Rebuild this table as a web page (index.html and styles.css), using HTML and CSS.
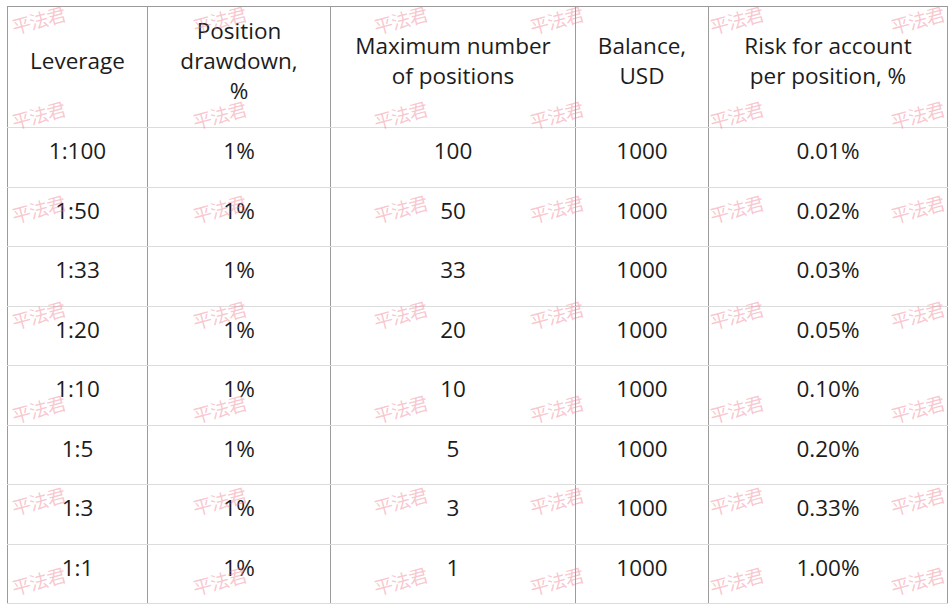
FILE: index.html
```html
<!DOCTYPE html>
<html lang="en">
<head>
<meta charset="utf-8">
<title>Leverage table</title>
<link rel="stylesheet" href="styles.css">
</head>
<body>
<div class="page">
  <table class="risk">
    <colgroup>
      <col class="c1"><col class="c2"><col class="c3"><col class="c4"><col class="c5">
    </colgroup>
    <thead>
      <tr>
        <th>Leverage</th>
        <th class="narrow">Position drawdown, %</th>
        <th>Maximum number of positions</th>
        <th>Balance, USD</th>
        <th>Risk for account per position, %</th>
      </tr>
    </thead>
    <tbody>
      <tr><td>1:100</td><td>1%</td><td>100</td><td>1000</td><td>0.01%</td></tr>
      <tr><td>1:50</td><td>1%</td><td>50</td><td>1000</td><td>0.02%</td></tr>
      <tr><td>1:33</td><td>1%</td><td>33</td><td>1000</td><td>0.03%</td></tr>
      <tr><td>1:20</td><td>1%</td><td>20</td><td>1000</td><td>0.05%</td></tr>
      <tr><td>1:10</td><td>1%</td><td>10</td><td>1000</td><td>0.10%</td></tr>
      <tr><td>1:5</td><td>1%</td><td>5</td><td>1000</td><td>0.20%</td></tr>
      <tr><td>1:3</td><td>1%</td><td>3</td><td>1000</td><td>0.33%</td></tr>
      <tr><td>1:1</td><td>1%</td><td>1</td><td>1000</td><td>1.00%</td></tr>
    </tbody>
  </table>
  <div class="marks" aria-hidden="true">
    <span class="wm x1 y1">平法君</span><span class="wm x2 y1">平法君</span><span class="wm x3 y1">平法君</span><span class="wm x4 y1">平法君</span><span class="wm x5 y1">平法君</span><span class="wm x6 y1">平法君</span>
    <span class="wm x1 y2">平法君</span><span class="wm x2 y2">平法君</span><span class="wm x3 y2">平法君</span><span class="wm x4 y2">平法君</span><span class="wm x5 y2">平法君</span><span class="wm x6 y2">平法君</span>
    <span class="wm x1 y3">平法君</span><span class="wm x2 y3">平法君</span><span class="wm x3 y3">平法君</span><span class="wm x4 y3">平法君</span><span class="wm x5 y3">平法君</span><span class="wm x6 y3">平法君</span>
    <span class="wm x1 y4">平法君</span><span class="wm x2 y4">平法君</span><span class="wm x3 y4">平法君</span><span class="wm x4 y4">平法君</span><span class="wm x5 y4">平法君</span><span class="wm x6 y4">平法君</span>
    <span class="wm x1 y5">平法君</span><span class="wm x2 y5">平法君</span><span class="wm x3 y5">平法君</span><span class="wm x4 y5">平法君</span><span class="wm x5 y5">平法君</span><span class="wm x6 y5">平法君</span>
    <span class="wm x1 y6">平法君</span><span class="wm x2 y6">平法君</span><span class="wm x3 y6">平法君</span><span class="wm x4 y6">平法君</span><span class="wm x5 y6">平法君</span><span class="wm x6 y6">平法君</span>
    <span class="wm x1 y7">平法君</span><span class="wm x2 y7">平法君</span><span class="wm x3 y7">平法君</span><span class="wm x4 y7">平法君</span><span class="wm x5 y7">平法君</span><span class="wm x6 y7">平法君</span>
  </div>
</div>
</body>
</html>
```

FILE: styles.css
```css
html, body {
  margin: 0;
  padding: 0;
  background: #ffffff;
}

.page {
  position: relative;
  width: 951px;
  height: 612px;
  padding: 6px 0 0 7px;
  box-sizing: border-box;
  overflow: hidden;
}

.risk {
  border-collapse: collapse;
  table-layout: fixed;
  width: 940px;
  font-family: "Open Sans", "Liberation Sans", sans-serif;
  font-size: 22.5px;
  line-height: 30px;
  color: #1c1c1c;
}

.c1 { width: 140px; }
.c2 { width: 183px; }
.c3 { width: 245px; }
.c4 { width: 133px; }
.c5 { width: 239px; }

.risk th,
.risk td {
  font-weight: 400;
  text-align: center;
  vertical-align: middle;
  padding: 8px 20px 20.5px;
  border-left: 1px solid #9c9c9c;
  border-right: 1px solid #9c9c9c;
  border-top: 1px solid #dcdcdc;
  border-bottom: 1px solid #dcdcdc;
}

.risk th {
  padding-top: 9px;
  padding-bottom: 21px;
  border-top: 1px solid #9a9a9a;
}

.risk th.narrow {
  padding-left: 26px;
  padding-right: 26px;
}

.marks {
  position: absolute;
  inset: 0;
  pointer-events: none;
}

.wm {
  position: absolute;
  width: 64px;
  height: 32px;
  margin-left: -32px;
  margin-top: -16px;
  display: flex;
  align-items: center;
  justify-content: center;
  font-family: "Noto Sans CJK SC", sans-serif;
  font-size: 19px;
  line-height: 1;
  letter-spacing: -1px;
  color: rgba(240, 120, 140, 0.42);
  transform: rotate(-15deg);
  white-space: nowrap;
}

.x1 { left: 38px; }
.x2 { left: 219px; }
.x3 { left: 400px; }
.x4 { left: 556px; }
.x5 { left: 736px; }
.x6 { left: 917px; }

.y1 { top: 19px; }
.y2 { top: 114px; }
.y3 { top: 208px; }
.y4 { top: 314px; }
.y5 { top: 408px; }
.y6 { top: 500px; }
.y7 { top: 580px; }
```
